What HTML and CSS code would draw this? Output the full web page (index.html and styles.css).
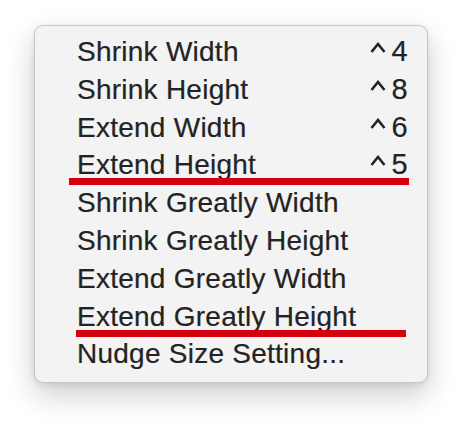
FILE: index.html
```html
<!DOCTYPE html>
<html lang="en">
<head>
  <meta charset="UTF-8" />
  <title>Size Menu</title>
  <link rel="stylesheet" href="styles.css">
</head>
<body>
  <div class="menu">
    <div class="item"><span>Shrink Width</span><span class="shortcut"><svg class="caret" viewBox="0 0 16 11"><polyline points="1.5,10 8,2 14.5,10" /></svg><span>4</span></span></div>
    <div class="item"><span>Shrink Height</span><span class="shortcut"><svg class="caret" viewBox="0 0 16 11"><polyline points="1.5,10 8,2 14.5,10" /></svg><span>8</span></span></div>
    <div class="item"><span>Extend Width</span><span class="shortcut"><svg class="caret" viewBox="0 0 16 11"><polyline points="1.5,10 8,2 14.5,10" /></svg><span>6</span></span></div>
    <div class="item"><span>Extend Height</span><span class="shortcut"><svg class="caret" viewBox="0 0 16 11"><polyline points="1.5,10 8,2 14.5,10" /></svg><span>5</span></span></div>
    <div class="item"><span>Shrink Greatly Width</span></div>
    <div class="item"><span>Shrink Greatly Height</span></div>
    <div class="item"><span>Extend Greatly Width</span></div>
    <div class="item"><span>Extend Greatly Height</span></div>
    <div class="item"><span>Nudge Size Setting...</span></div>

    <!-- annotation strokes -->
    <div class="mark mark-one"></div>
    <div class="mark mark-two"></div>
  </div>
</body>
</html>
```

FILE: styles.css
```css
body {
  margin: 0;
  min-height: 426px;
  padding: 25px 0 0 34px;
  box-sizing: border-box;
  background-color: #ffffff;
  font-family: 'Liberation Sans', Arial, sans-serif;
  color: #232323;
}

.menu {
  position: relative;
  width: 394px;
  padding: 7px 0 9px 0;
  box-sizing: border-box;
  background-color: #f3f3f3;
  border: 1px solid #c6c6c6;
  border-radius: 9px;
  box-shadow: 0 12px 30px rgba(0, 0, 0, 0.2), 0 2px 6px rgba(0, 0, 0, 0.08);
}

.item {
  display: flex;
  justify-content: space-between;
  align-items: flex-start;
  padding: 0 19px 0 42px;
  font-size: 28px;
  line-height: 37.8px;
  letter-spacing: 0.25px;
  -webkit-text-stroke: 0.2px #232323;
}

.shortcut {
  display: flex;
  align-items: flex-start;
  gap: 6px;
  font-size: 29px;
}

.caret {
  width: 16px;
  height: 11px;
  margin-top: 9px;
  fill: none;
  stroke: #232323;
  stroke-width: 2.6;
}

.mark {
  position: absolute;
  height: 7px;
  background-color: #d5000f;
}

.mark-one {
  left: 34px;
  top: 152px;
  width: 340px;
}

.mark-two {
  left: 41px;
  top: 304px;
  width: 330px;
}
```
